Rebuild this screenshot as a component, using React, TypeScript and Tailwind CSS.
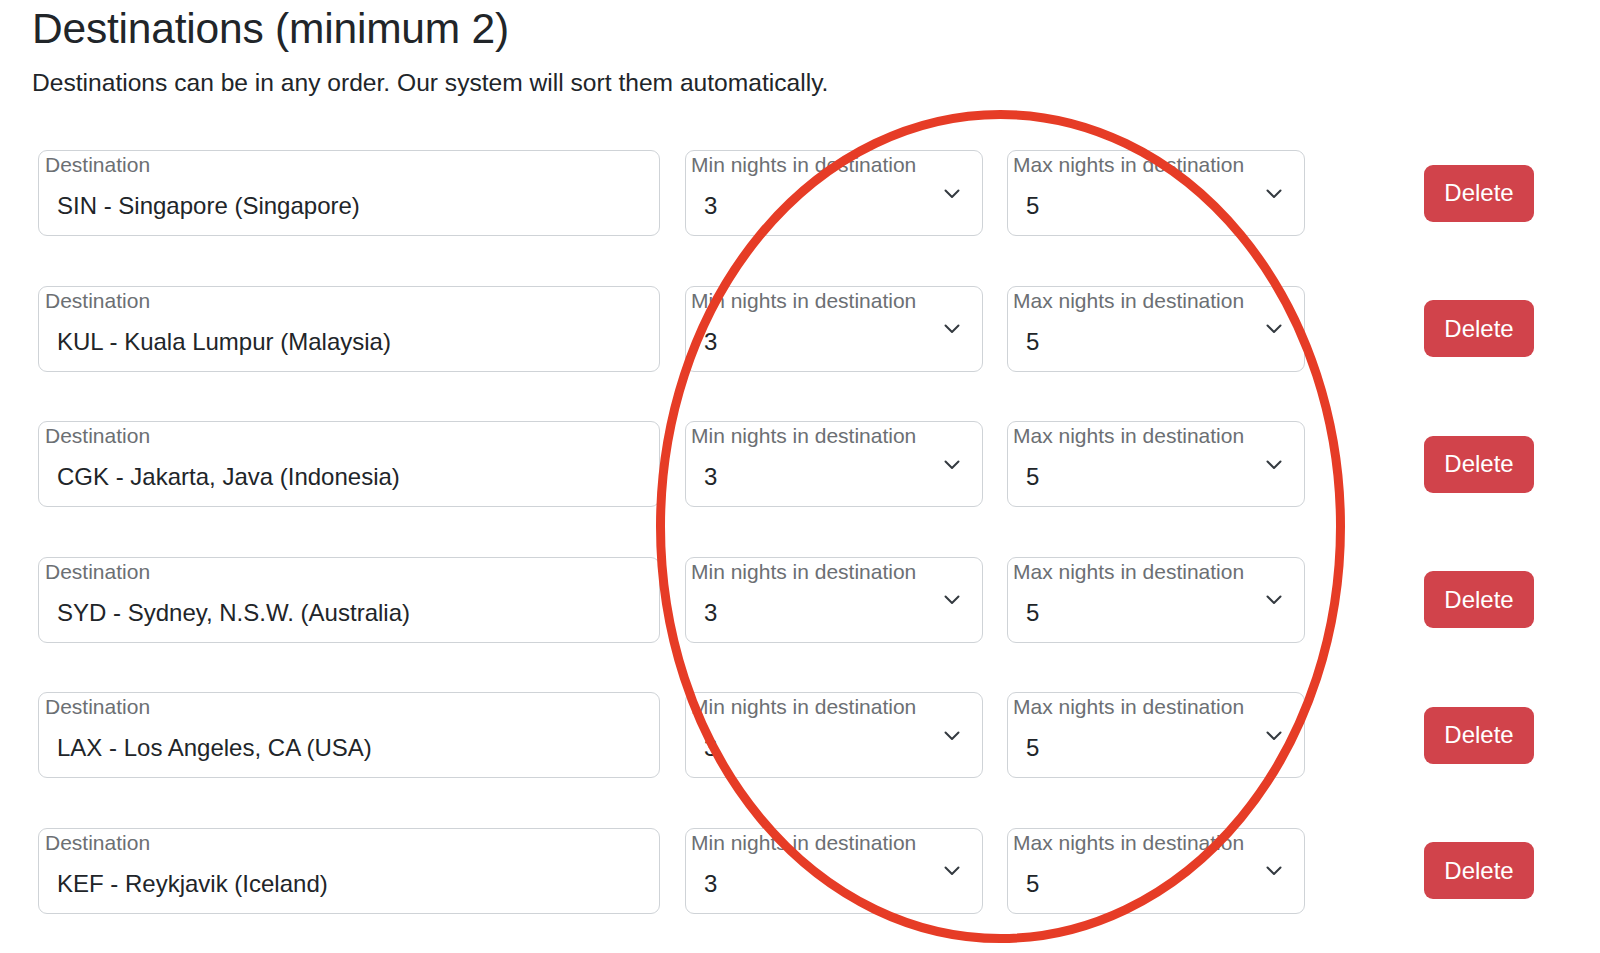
import React from "react";

const destinations = [
    "SIN - Singapore (Singapore)",
    "KUL - Kuala Lumpur (Malaysia)",
    "CGK - Jakarta, Java (Indonesia)",
    "SYD - Sydney, N.S.W. (Australia)",
    "LAX - Los Angeles, CA (USA)",
    "KEF - Reykjavik (Iceland)",
];

function Chevron() {
    return (
        <svg width="16" height="10" viewBox="0 0 16 10" className="shrink-0">
            <polyline points="1.5,1.5 8,8 14.5,1.5" fill="none" stroke="#343a40" strokeWidth="2" strokeLinecap="round" strokeLinejoin="round" />
        </svg>
    );
}

function NightsSelect({ label, value }: { label: string; value: string }) {
    return (
        <div className="w-[298px] h-[86px] border border-[#cfd3d7] rounded-[9px] bg-white flex items-center pr-[22px]">
            <div className="flex-1 flex flex-col h-full pt-[3px] pl-[5px]">
                <span className="text-[21px] leading-[21px] text-[#6c6f73]">{label}</span>
                <span className="text-[24px] leading-[24px] text-[#212529] mt-[19px] pl-[13px]">{value}</span>
            </div>
            <div className="mt-[1px]">
                <Chevron />
            </div>
        </div>
    );
}

export default function App() {
    return (
        <div className="relative min-h-[953px] bg-white text-[#212529] font-['Liberation_Sans',Arial,sans-serif]">
            <div className="pl-[32px] pt-[4px]">
                <h2 className="text-[42.5px] leading-[50px] tracking-[-0.2px]">Destinations (minimum 2)</h2>
                <p className="text-[24.6px] leading-[30px] mt-[14px]">
                    Destinations can be in any order. Our system will sort them automatically.
                </p>
            </div>

            <div className="pl-[38px] pt-[52px] flex flex-col gap-[49.5px]">
                {destinations.map((dest) => (
                    <div key={dest} className="flex items-center">
                        {/* Destination input */}
                        <div className="w-[622px] h-[86px] border border-[#cfd3d7] rounded-[9px] bg-white flex flex-col pt-[3px] pl-[6px]">
                            <span className="text-[21px] leading-[21px] text-[#6c6f73]">Destination</span>
                            <span className="text-[24px] leading-[24px] text-[#212529] mt-[19px] pl-[12px]">{dest}</span>
                        </div>
                        <div className="ml-[25px]">
                            <NightsSelect label="Min nights in destination" value="3" />
                        </div>
                        <div className="ml-[24px]">
                            <NightsSelect label="Max nights in destination" value="5" />
                        </div>
                        <button className="ml-[119px] w-[110px] h-[57px] rounded-[9px] bg-[#d1434b] text-white text-[24px] leading-[24px]">
                            Delete
                        </button>
                    </div>
                ))}
            </div>

            {/* annotation ring */}
            <svg className="absolute left-0 top-0 pointer-events-none" width="1600" height="953">
                <ellipse cx="1000.5" cy="526.5" rx="340" ry="412" fill="none" stroke="#e63c26" strokeWidth="9" />
            </svg>
        </div>
    );
}
